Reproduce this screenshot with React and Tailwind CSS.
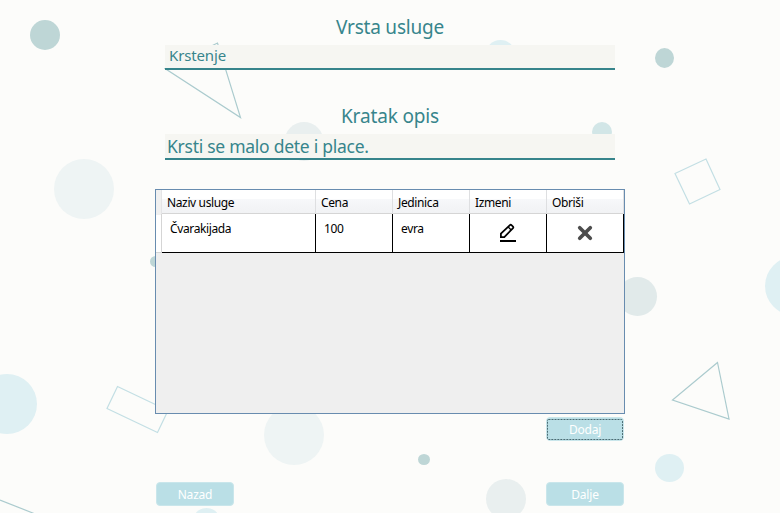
import React from "react";

function Backdrop() {
  return (
    <svg className="absolute inset-0" width="780" height="513" viewBox="0 0 780 513" fill="none">
      <circle cx="45" cy="35" r="15" fill="#bed6d6" />
      <circle cx="84" cy="189" r="30" fill="#eef4f4" />
      <circle cx="155.500" cy="261.500" r="5.500" fill="#bed6d6" />
      <circle cx="7" cy="404" r="30" fill="#dff0f3" />
      <circle cx="206.500" cy="522" r="14" fill="#dff0f3" />
      <circle cx="304" cy="141.500" r="19.500" fill="#e9efef" />
      <ellipse cx="500.500" cy="54" rx="14.500" ry="14" fill="#dff0f3" />
      <circle cx="602" cy="132" r="10" fill="#d2e6e7" />
      <ellipse cx="664.500" cy="58" rx="9.500" ry="10" fill="#bed6d6" />
      <circle cx="637.500" cy="296.500" r="19.500" fill="#e1eaea" />
      <circle cx="794.500" cy="286" r="29.500" fill="#dff0f3" />
      <circle cx="294" cy="435" r="30" fill="#eef4f4" />
      <ellipse cx="424" cy="459.500" rx="6" ry="5.500" fill="#bed6d6" />
      <circle cx="506" cy="499" r="20" fill="#e9efef" />
      <ellipse cx="669.500" cy="468" rx="14.500" ry="14" fill="#dff0f3" />
      <path d="M165 68.500 217.500 43 240.500 117.500Z" stroke="#abcbce" strokeWidth="1.200" />
      <path d="M675 173.500 706 159 720 189.500 689.500 204Z" stroke="#c3dfe4" strokeWidth="1.200" />
      <path d="M117.500 386.500 168 410.500 157.500 432.500 107 408.500Z" stroke="#c3dfe4" strokeWidth="1.200" />
      <path d="M717.500 362.500 672.500 400 729 419Z" stroke="#abcbce" strokeWidth="1.200" />
      <path d="M0 500 34 513.500" stroke="#abcbce" strokeWidth="1.200" />
    </svg>
  );
}

function PencilIcon() {
  return (
    <svg width="18" height="20" viewBox="0 0 18 20" fill="none" stroke="#000">
      <path d="M1.900 14.100V10.700L10.900 2.100Q11.700 1.400 12.500 2.100L14 3.500Q14.700 4.300 14 5.100L5.300 14.100Z" strokeWidth="1.750" />
      <path d="M9.200 4 12.200 7" strokeWidth="1.200" />
      <path d="M1 18H17" strokeWidth="2" />
    </svg>
  );
}

function CrossIcon() {
  return (
    <svg width="16" height="16" viewBox="0 0 16 16" stroke="#4d4d4d" strokeWidth="3.700" strokeLinecap="round">
      <path d="M2.700 2.700 13.300 13.300M13.300 2.700 2.700 13.300" />
    </svg>
  );
}

function Button({ children, focused }) {
  return (
    <button className="relative h-6 w-[78px] rounded-[4px] border border-[#c9e6eb] bg-[#badfe6] text-center text-[12px] leading-[24px] tracking-[-0.2px] text-white">
      {children}
      {focused && (
        <svg className="absolute left-0 top-0" width="76" height="22" fill="none">
          <rect x="0.500" y="1.500" width="75" height="20" rx="1" stroke="#4b6c74" strokeDasharray="2 1" />
        </svg>
      )}
    </button>
  );
}

const columns = ["Naziv usluge", "Cena", "Jedinica", "Izmeni", "Obriši"];
const gridCols = "grid grid-cols-[6px_154px_77px_77px_77px_77px]";

export default function App() {
  return (
    <div className="relative h-[513px] w-[780px] overflow-hidden bg-[#fcfcfa] font-['Noto_Sans','Open_Sans',sans-serif] text-[#37858c]">
      <Backdrop />
      <main className="relative flex flex-col items-center">
        <h1 className="mt-[13px] h-8 text-[19px] leading-[28px] tracking-[-0.22px]">Vrsta usluge</h1>
        <div className="h-[25px] w-[450px] border-b-2 border-[#36848b] bg-[#f6f6f2] pl-1 text-[15px] leading-[20px] tracking-[-0.15px]">
          Krstenje
        </div>
        <h2 className="mt-8 h-8 text-[19px] leading-[28px] tracking-[-0.15px]">Kratak opis</h2>
        <div className="h-[26px] w-[450px] border-b-2 border-[#36848b] bg-[#f6f6f2] pl-0.5 text-[17.500px] leading-[25px] tracking-[-0.27px]">
          Krsti se malo dete i place.
        </div>
        <section className="mt-[29px] h-[225px] w-[470px] border border-[#688caf] bg-[#efefef] text-[12px] tracking-[-0.37px] text-black">
          <div className={`${gridCols} h-6 border-b border-[#d5d5d5] bg-[linear-gradient(#fff_0_40%,#f7f8fa_40%,#f1f2f4)]`}>
            <span className="border-r border-[#e4e4e6] bg-[#f0f0f0]" />
            {columns.map((label) => (
              <span key={label} className="border-r border-[#dedfe1] pl-[5px] leading-[25px]">{label}</span>
            ))}
          </div>
          <div className={`${gridCols} h-[39px] bg-white`}>
            <span className="border-b border-r border-[#d5d5d5]" />
            <span className="border-b border-r border-black pl-2 pt-[6px] leading-[18px]">Čvarakijada</span>
            <span className="border-b border-r border-black pl-2 pt-[6px] leading-[18px]">100</span>
            <span className="border-b border-r border-black pl-2 pt-[6px] leading-[18px]">evra</span>
            <span className="flex items-center justify-center border-b border-r border-black"><PencilIcon /></span>
            <span className="flex items-center justify-center border-b border-r border-black"><CrossIcon /></span>
          </div>
        </section>
        <div className="mt-[3px] flex w-[468px] justify-end">
          <Button focused>Dodaj</Button>
        </div>
        <div className="mt-[41px] flex w-[468px] justify-between">
          <Button>Nazad</Button>
          <Button>Dalje</Button>
        </div>
      </main>
    </div>
  );
}
